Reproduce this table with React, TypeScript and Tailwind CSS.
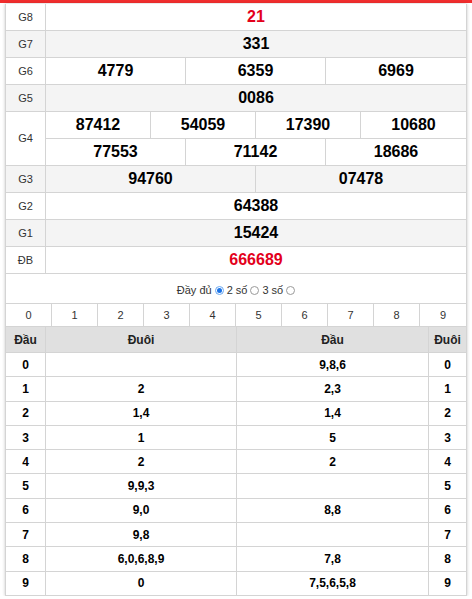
import React from "react"

const prizes: { label: string; rows: string[][]; red?: boolean; grey?: boolean }[] = [
  { label: "G8", rows: [["21"]], red: true },
  { label: "G7", rows: [["331"]], grey: true },
  { label: "G6", rows: [["4779", "6359", "6969"]] },
  { label: "G5", rows: [["0086"]], grey: true },
  { label: "G4", rows: [["87412", "54059", "17390", "10680"], ["77553", "71142", "18686"]] },
  { label: "G3", rows: [["94760", "07478"]], grey: true },
  { label: "G2", rows: [["64388"]] },
  { label: "G1", rows: [["15424"]], grey: true },
  { label: "ĐB", rows: [["666689"]], red: true },
]

const loto: [string, string, string, string][] = [
  ["0", "", "9,8,6", "0"],
  ["1", "2", "2,3", "1"],
  ["2", "1,4", "1,4", "2"],
  ["3", "1", "5", "3"],
  ["4", "2", "2", "4"],
  ["5", "9,9,3", "", "5"],
  ["6", "9,0", "8,8", "6"],
  ["7", "9,8", "", "7"],
  ["8", "6,0,6,8,9", "7,8", "8"],
  ["9", "0", "7,5,6,5,8", "9"],
]

const gridCols: Record<number, string> = {
  1: "grid-cols-1",
  2: "grid-cols-2",
  3: "grid-cols-3",
  4: "grid-cols-4",
}

function Radio({ checked }: { checked?: boolean }) {
  return checked ? (
    <span className="inline-flex h-[9px] w-[9px] items-center justify-center rounded-full border border-[#6aa8f0] bg-white">
      <span className="h-[5px] w-[5px] rounded-full bg-[#1a73e8]" />
    </span>
  ) : (
    <span className="inline-block h-[9px] w-[9px] rounded-full border border-[#9a9a9a] bg-white" />
  )
}

export default function App() {
  return (
    <div className="w-[472px] bg-white font-['Liberation_Sans',Arial,sans-serif]">
      <div className="h-[3px] bg-[#f02d2d]" />
      <div className="mx-[5px] mt-[1px] border-x border-[#d4d4d4] shadow-[0_0_3px_rgba(0,0,0,0.22)]">
        {/* Prize table */}
        {prizes.map((p) => (
          <div
            key={p.label}
            className={`flex border-b border-[#d4d4d4] ${p.grey ? "bg-[#f4f4f4]" : "bg-white"} ${
              p.rows.length > 1 ? "h-[54px]" : "h-[27px]"
            }`}
          >
            <div className="flex w-[40px] items-center justify-center border-r border-[#d4d4d4] text-[11px] text-[#333]">
              {p.label}
            </div>
            <div className="flex flex-1 flex-col">
              {p.rows.map((r, i) => (
                <div
                  key={i}
                  className={`grid flex-1 divide-x divide-[#d4d4d4] ${gridCols[r.length]} ${
                    i < p.rows.length - 1 ? "border-b border-[#d4d4d4]" : ""
                  }`}
                >
                  {r.map((n) => (
                    <div
                      key={n}
                      className={`flex items-center justify-center text-[16px] font-bold ${
                        p.red ? "text-[#e3001b]" : "text-black"
                      }`}
                    >
                      {n}
                    </div>
                  ))}
                </div>
              ))}
            </div>
          </div>
        ))}

        {/* Options */}
        <div className="flex h-[29px] items-center justify-center gap-[3px] pt-[4px] text-[11px] text-[#333]">
          <span>Đầy đủ</span>
          <Radio checked />
          <span>2 số</span>
          <Radio />
          <span>3 số</span>
          <Radio />
        </div>

        {/* Digits */}
        <div className="grid h-[24px] grid-cols-10 divide-x divide-[#d4d4d4] border-y border-[#d4d4d4] text-[11px] text-[#333]">
          {Array.from({ length: 10 }, (_, i) => (
            <div key={i} className="flex items-center justify-center">
              {i}
            </div>
          ))}
        </div>

        {/* Loto table */}
        <div className="grid h-[26px] grid-cols-[40px_191px_192px_1fr] divide-x divide-[#d4d4d4] border-b border-[#d4d4d4] bg-[#e0e0e0] text-[12px] font-bold text-[#222]">
          <div className="flex items-center justify-center">Đầu</div>
          <div className="flex items-center justify-center">Đuôi</div>
          <div className="flex items-center justify-center">Đầu</div>
          <div className="flex items-center justify-center">Đuôi</div>
        </div>
        {loto.map((row) => (
          <div
            key={row[0]}
            className="grid h-[24.3px] grid-cols-[40px_191px_192px_1fr] divide-x divide-[#d4d4d4] border-b border-[#d4d4d4] text-[12px] font-bold text-black"
          >
            {row.map((c, i) => (
              <div key={i} className="flex items-center justify-center">
                {c}
              </div>
            ))}
          </div>
        ))}
      </div>
    </div>
  )
}
